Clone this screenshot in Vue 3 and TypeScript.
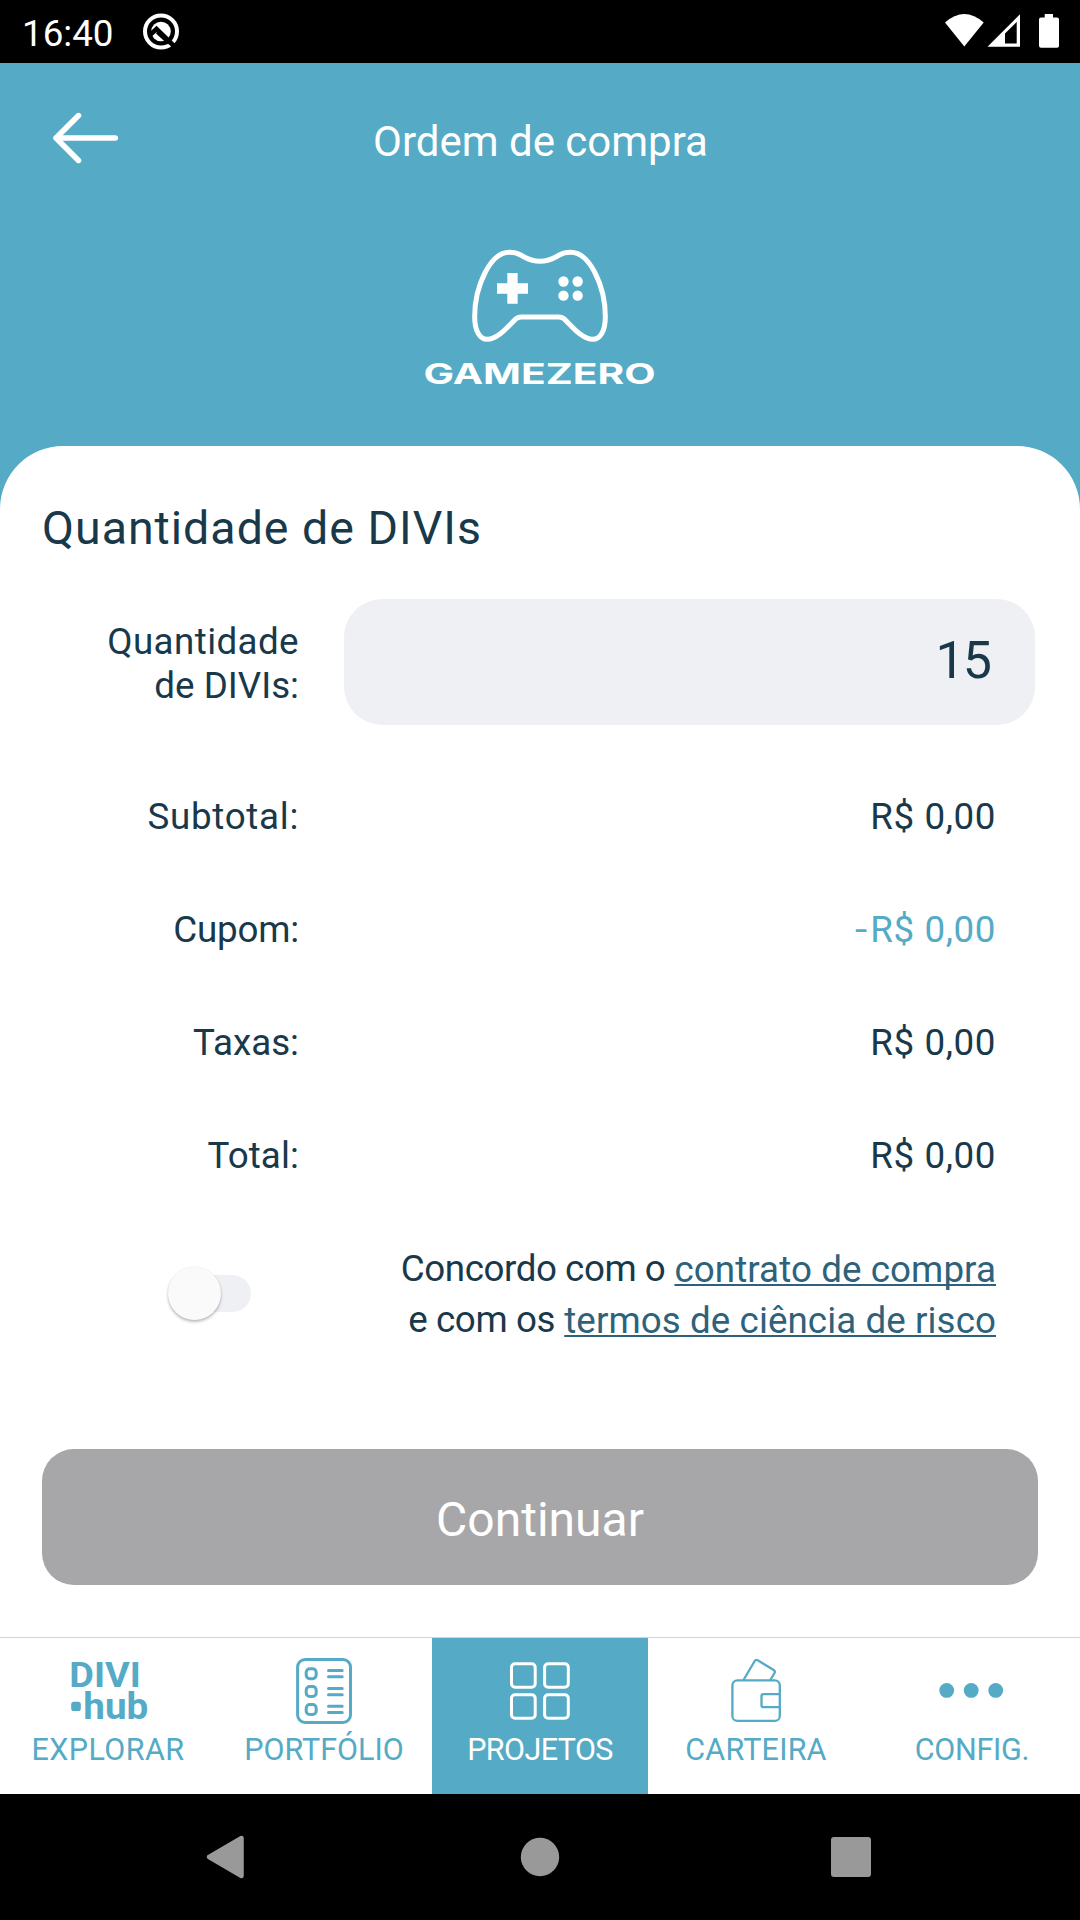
<script setup lang="ts">
import { ref } from 'vue'

interface SummaryRow {
  label: string
  sign?: string
  value: string
  spacing: number
  accent?: boolean
}

interface NavItem {
  id: string
  label: string
  spacing: number
  viewBox: string
}

const quantity = ref('15')
const accepted = ref(false)
const active = ref('projetos')

const rows: SummaryRow[] = [
  { label: 'Subtotal:', value: 'R$ 0,00', spacing: 0.7 },
  { label: 'Cupom:', sign: '-', value: 'R$ 0,00', spacing: -0.2, accent: true },
  { label: 'Taxas:', value: 'R$ 0,00', spacing: 0 },
  { label: 'Total:', value: 'R$ 0,00', spacing: 0.1 },
]

const navItems: NavItem[] = [
  { id: 'explorar', label: 'EXPLORAR', spacing: 0.4, viewBox: '68 1656 80 72' },
  { id: 'portfolio', label: 'PORTFÓLIO', spacing: 0, viewBox: '284 1656 80 72' },
  { id: 'projetos', label: 'PROJETOS', spacing: -0.6, viewBox: '500 1656 80 72' },
  { id: 'carteira', label: 'CARTEIRA', spacing: 0.2, viewBox: '716 1656 80 72' },
  { id: 'config', label: 'CONFIG.', spacing: -0.3, viewBox: '932 1656 80 72' },
]
</script>

<template>
  <div class="screen">
    <div class="status">
      <div class="status-left">
        <span class="clock">16:40</span>
        <svg width="40" height="40" viewBox="141 12 40 40">
          <circle cx="161" cy="31.5" r="16" fill="none" stroke="#fff" stroke-width="4" />
          <circle cx="161" cy="31.5" r="9.8" fill="#fff" />
          <path d="M150.500 34.500 L156.500 29 L174.500 46.500" fill="none" stroke="#000" stroke-width="4.600" />
          <path d="M157 32.500 L169 43.500" fill="none" stroke="#000" stroke-width="3" />
        </svg>
      </div>
      <svg width="120" height="63" viewBox="942 0 120 63" fill="#fff">
        <path d="M945 22.500 Q964.300 5.500 983.700 22.500 L964.300 46.500 Z" />
        <path fill-rule="evenodd" d="M987.500 46.700 L1020 14.300 V46.700 Z M1005 33.500 V43.500 H1016.700 V22 Z" />
        <path d="M1044.700 14 H1053 V17.500 H1057 Q1059 17.500 1059 19.500 V45.700 Q1059 47.700 1057 47.700 H1041 Q1039 47.700 1039 45.700 V19.500 Q1039 17.500 1041 17.500 H1044.700 Z" />
      </svg>
    </div>

    <header class="header">
      <div class="topbar">
        <svg class="back" width="160" height="157" viewBox="0 63 160 157">
          <path d="M78.500 115.600 L56 138 L78.500 160.400 M56 138 H115.300" fill="none" stroke="#fff" stroke-width="5.600" stroke-linecap="round" stroke-linejoin="round" />
        </svg>
        <h1 class="title">Ordem de compra</h1>
        <span></span>
      </div>
      <svg class="brand" width="240" height="144" viewBox="420 246 240 144">
        <g transform="translate(340 100) scale(0.333333)">
          <path d="M600 484 C570 484 558 474 542 465 C531 459 520 457 508 457 C450 457 404 560 404 650 C404 694 420 718 442 718 C474 718 505 678 526 658 Q533 651 544 651 H656 Q667 651 674 658 C695 678 726 718 758 718 C780 718 796 694 796 650 C796 560 750 457 692 457 C680 457 669 459 658 465 C642 474 630 484 600 484 Z" fill="none" stroke="#fff" stroke-width="15" />
          <path d="M502 519 H533 V550 H564 V581 H533 V611 H502 V581 H471 V550 H502 Z" fill="#fff" />
          <g fill="#fff">
            <circle cx="670.500" cy="544.500" r="15.500" />
            <circle cx="713" cy="544.500" r="15.500" />
            <circle cx="670.500" cy="587" r="15.500" />
            <circle cx="713" cy="587" r="15.500" />
          </g>
        </g>
        <text x="423.500" y="384" class="brand-name" textLength="232" lengthAdjust="spacingAndGlyphs">GAMEZERO</text>
      </svg>
    </header>

    <main class="card">
      <h2 class="heading">Quantidade de DIVIs</h2>

      <div class="quantity">
        <label class="quantity-label" for="qty">Quantidade<br /><span class="tight">de DIVIs:</span></label>
        <input id="qty" v-model="quantity" class="quantity-input" type="text" />
      </div>

      <div class="summary">
        <div v-for="row in rows" :key="row.label" class="row">
          <span class="row-label" :style="{ letterSpacing: row.spacing + 'px' }">{{ row.label }}</span>
          <span class="row-value" :class="{ accent: row.accent }"><span v-if="row.sign" class="sign">{{ row.sign }}</span>{{ row.value }}</span>
        </div>
      </div>

      <div class="terms">
        <button class="switch" :class="{ on: accepted }" type="button" @click="accepted = !accepted">
          <span class="thumb"></span>
        </button>
        <p class="terms-text">
          <span class="plain-a">Concordo com o</span> <a>contrato de compra</a><br />
          <span class="plain-b">e com os</span> <a>termos de ciência de risco</a>
        </p>
      </div>

      <button class="submit" type="button">Continuar</button>
    </main>

    <nav class="nav">
      <div v-for="item in navItems" :key="item.id" class="nav-item" :class="{ active: item.id === active }" @click="active = item.id">
        <svg width="80" height="72" :viewBox="item.viewBox" fill="none" stroke="currentColor">
          <g v-if="item.id === 'explorar'" fill="currentColor" stroke="none">
            <text x="69.300" y="1687" class="divi" textLength="71.500" lengthAdjust="spacingAndGlyphs">DIVI</text>
            <rect x="71.200" y="1701.700" width="9.600" height="9.400" rx="2.600" />
            <text x="83.300" y="1718.600" class="hub" textLength="65" lengthAdjust="spacingAndGlyphs">hub</text>
          </g>
          <g v-else-if="item.id === 'portfolio'" stroke-width="3">
            <rect x="297.600" y="1659.500" width="52.900" height="63" rx="7.500" />
            <rect x="306.200" y="1668.700" width="10" height="10" rx="3.600" />
            <rect x="306.200" y="1686.600" width="10" height="10" rx="3.600" />
            <rect x="306.200" y="1704.600" width="10" height="10" rx="3.600" />
            <path stroke-linecap="round" d="M328.500 1670.400 H342.200 M328.500 1676.800 H342.200 M328.500 1688.400 H342.200 M328.500 1694.700 H342.200 M328.500 1706.300 H342.200 M328.500 1712.500 H342.200" />
          </g>
          <g v-else-if="item.id === 'projetos'" stroke-width="3">
            <rect x="511.500" y="1663.800" width="23.700" height="23.500" rx="3.500" />
            <rect x="544.600" y="1663.800" width="23.700" height="23.500" rx="3.500" />
            <rect x="511.500" y="1694.800" width="23.700" height="23.500" rx="3.500" />
            <rect x="544.600" y="1694.800" width="23.700" height="23.500" rx="3.500" />
          </g>
          <g v-else-if="item.id === 'carteira'" stroke-width="2.300">
            <rect x="732.400" y="1680.400" width="47.400" height="40.500" rx="5" />
            <path d="M780 1694.100 H763.500 Q761.500 1694.100 761.500 1696.100 V1705.200 Q761.500 1707.200 763.500 1707.200 H780" />
            <path d="M743.500 1680 L754.700 1661 Q755.900 1659.300 757.700 1660.300 L773.700 1670 Q775.500 1671.200 774.500 1673 L770.300 1680" />
          </g>
          <g v-else fill="currentColor" stroke="none">
            <circle cx="946.700" cy="1690.400" r="7.400" />
            <circle cx="971.200" cy="1690.400" r="7.400" />
            <circle cx="995.700" cy="1690.400" r="7.400" />
          </g>
        </svg>
        <span class="nav-label" :style="{ letterSpacing: item.spacing + 'px' }">{{ item.label }}</span>
      </div>
    </nav>

    <div class="system">
      <svg width="1080" height="126" viewBox="0 1794 1080 126" fill="#999">
        <path d="M241.500 1838 V1876 L209 1857 Z" stroke="#999" stroke-width="4.500" stroke-linejoin="round" />
        <circle cx="540" cy="1857" r="19.200" />
        <rect x="831" y="1837" width="40" height="40" rx="3" />
      </svg>
    </div>
  </div>
</template>

<style>
body {
  background: #55aac5;
}
</style>

<style scoped>
.screen {
  width: 1080px;
  height: 1920px;
  display: flex;
  flex-direction: column;
  overflow: hidden;
  background: #55aac5;
  color: #19394b;
  font-family: Roboto, 'Liberation Sans', sans-serif;
  font-size: 36.75px;
}

.status {
  height: 63px;
  flex: none;
  display: flex;
  align-items: center;
  justify-content: space-between;
  padding: 0 18px 0 22px;
  background: #000;
  color: #fff;
}

.status-left {
  display: flex;
  align-items: center;
  gap: 27px;
}

.clock {
  line-height: 40px;
  padding-top: 4px;
}

.header {
  height: 383px;
  flex: none;
  display: flex;
  flex-direction: column;
  align-items: center;
  color: #fff;
}

.topbar {
  width: 100%;
  height: 157px;
  display: grid;
  grid-template-columns: 160px 1fr 160px;
  align-items: center;
}

.title {
  margin: 0;
  padding-left: 1px;
  text-align: center;
  font-size: 42px;
  font-weight: 400;
  line-height: 56px;
}

.brand {
  margin-top: 26px;
}

.brand-name {
  font-family: Inter, sans-serif;
  font-size: 28px;
  font-weight: 700;
  fill: #fff;
}

.card {
  flex: 1;
  display: flex;
  flex-direction: column;
  padding: 54px 42px 0;
  border-radius: 63px 63px 0 0;
  background: #fff;
}

.heading {
  margin: 0;
  font-size: 46.5px;
  font-weight: 400;
  line-height: 56px;
  letter-spacing: 1px;
}

.quantity {
  height: 126px;
  margin-top: 43px;
  display: grid;
  grid-template-columns: 257px 691px;
  column-gap: 45px;
  align-items: center;
}

.quantity-label {
  padding-top: 3px;
  text-align: right;
  line-height: 44px;
  letter-spacing: 0.4px;
}

.tight {
  letter-spacing: 0;
}

.quantity-input {
  box-sizing: border-box;
  width: 691px;
  height: 126px;
  padding: 0 45px 4px;
  border: 0;
  outline: 0;
  border-radius: 38px;
  background: #eff0f4;
  color: inherit;
  font-family: inherit;
  font-size: 52px;
  font-weight: 400;
  letter-spacing: -2px;
  text-align: right;
}

.summary {
  margin-top: 35px;
}

.row {
  height: 113px;
  display: flex;
  align-items: center;
  justify-content: space-between;
  padding-right: 42px;
}

.row-label {
  width: 257px;
  text-align: right;
}

.row-value {
  letter-spacing: 0.6px;
}

.sign {
  display: inline-block;
  margin-right: 3px;
  transform: scaleX(1.2);
}

.accent {
  color: #55aac5;
}

.terms {
  height: 102px;
  margin-top: 31px;
  padding: 0 42px 0 132px;
  display: flex;
  align-items: center;
  justify-content: space-between;
}

.switch {
  width: 77px;
  height: 37px;
  margin-bottom: 2px;
  padding: 0;
  border: 0;
  border-radius: 19px;
  background: #eff0f4;
  display: flex;
  align-items: center;
}

.switch.on {
  justify-content: flex-end;
  background: #55aac5;
}

.thumb {
  width: 53px;
  height: 53px;
  flex: none;
  margin-left: -6px;
  border-radius: 50%;
  background: #fafafa;
  box-shadow: 0 2px 3px rgba(0, 0, 0, 0.26), 0 0 2px rgba(0, 0, 0, 0.08);
}

.terms-text {
  margin: 0;
  text-align: right;
  line-height: 51px;
  white-space: nowrap;
}

.plain-a {
  letter-spacing: -0.45px;
}

.plain-b {
  letter-spacing: -0.4px;
}

.terms-text a {
  color: #2e627b;
  letter-spacing: 0.08px;
  line-height: 49px;
  vertical-align: -1px;
  text-decoration: underline;
  text-decoration-thickness: 2px;
  text-decoration-skip-ink: none;
  text-underline-offset: 2px;
}

.submit {
  height: 136px;
  margin-top: 104px;
  padding: 5px 0 0;
  border: 0;
  border-radius: 32px;
  background: #a7a7a9;
  color: #fff;
  font-family: inherit;
  font-size: 48px;
}

.nav {
  box-sizing: border-box;
  height: 157px;
  flex: none;
  display: grid;
  grid-template-columns: repeat(5, 216px);
  border-top: 1px solid #c6dade;
  background: #fff;
}

.nav-item {
  padding-top: 18px;
  display: flex;
  flex-direction: column;
  align-items: center;
  color: #55aac5;
}

.nav-item.active {
  background: #55aac5;
  color: #fff;
}

.nav-label {
  font-size: 30.5px;
  line-height: 44px;
}

.divi {
  font-size: 34.7px;
  font-weight: 700;
}

.hub {
  font-size: 36px;
  font-weight: 700;
}

.system {
  height: 126px;
  flex: none;
  background: #000;
}

.system svg {
  display: block;
}
</style>
